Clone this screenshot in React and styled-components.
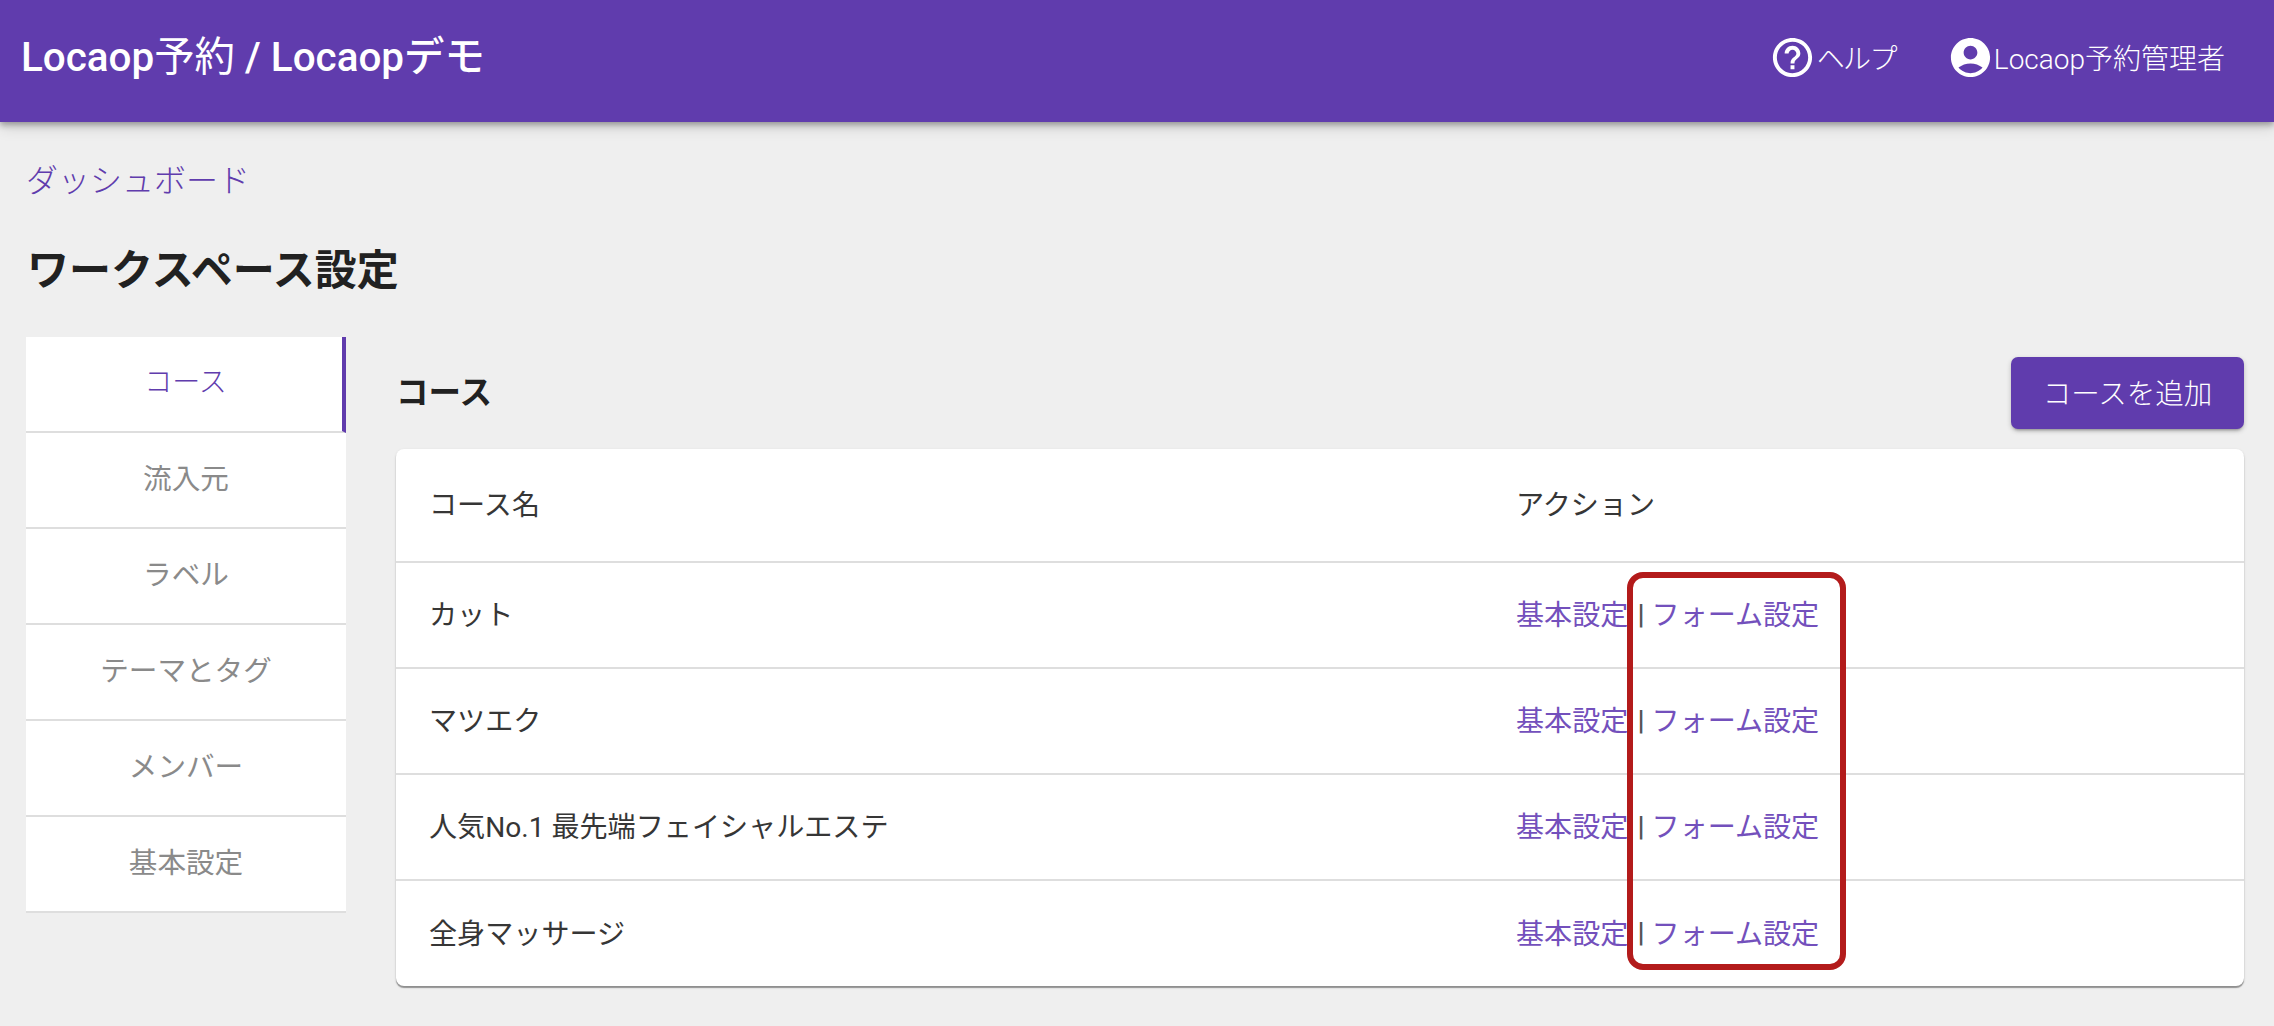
import React from "react";
import styled, { createGlobalStyle } from "styled-components";

const Global = createGlobalStyle`
  html, body { margin: 0; padding: 0; background: #efefef; }
  body { font-family: Roboto, "Noto Sans CJK JP", sans-serif; color: #212121; overflow: hidden; }
  * { box-sizing: border-box; }
`;
const purple = "#603cad";

const Page = styled.div`width: 2274px; height: 1026px; display: flex; flex-direction: column;`;
const Header = styled.header`
  height: 122px; flex: none; background: ${purple}; color: #fff; display: flex; align-items: center;
  justify-content: space-between; padding: 0 49px 8px 21px;
  box-shadow: 0 3px 6px rgba(0,0,0,.3), 0 6px 14px rgba(0,0,0,.12);
  margin-bottom: 37px;
`;
const Title = styled.div`font-size: 40.4px; font-weight: 500; line-height: 48px; white-space: nowrap; margin-top: 2px;`;
const Light = styled.span`font-weight: 400;`;
const HeaderNav = styled.nav`display: flex; align-items: center; gap: 51px;`;
const NavItem = styled.div`display: flex; align-items: center; font-size: 28px; font-weight: 300; gap: ${p => p.$gap}px; white-space: nowrap; letter-spacing: ${p => p.$tight ? "-1.6px" : "0"};`;
const Content = styled.main`padding: 0 30px 0 26px; flex: 1;`;
const Crumb = styled.a`display: block; font-size: 32px; color: ${purple}; line-height: 44px; font-weight: 300;`;
const PageTitle = styled.h1`margin: 40px 0 0 1px; font-size: 42px; font-weight: 700; line-height: 56px; height: 56px;`;
const Columns = styled.div`display: flex; gap: 50px; margin-top: 38px; align-items: flex-start;`;
const Side = styled.aside`width: 320px; flex: none; background: #fff;`;
const SideItem = styled.div`
  height: 96px; display: flex; align-items: center; justify-content: center;
  padding: 0 0 8px ${p => p.$active ? "3px" : "0"};
  font-size: ${p => p.$active ? "28px" : "28.6px"}; font-weight: ${p => p.$active ? 300 : 400}; color: ${p => p.$active ? purple : "#8a8a8a"};
  border-bottom: 2px solid #dedede;
  border-right: ${p => p.$active ? `4px solid ${purple}` : "none"};
`;
const Main = styled.section`flex: 1; min-width: 0;`;
const MainHead = styled.div`display: flex; justify-content: space-between; align-items: center; padding-top: 20px; height: 112px; padding-bottom: 20px;`;
const SubTitle = styled.h2`margin: 0 0 8px; font-size: 32.5px; font-weight: 700;`;
const AddButton = styled.button`
  width: 233px; height: 72px; border: 0; border-radius: 7px; background: ${purple}; color: #fff;
  font: 300 28.5px Roboto, "Noto Sans CJK JP", sans-serif; padding: 0 0 4px;
  box-shadow: 0 3px 3px -2px rgba(0,0,0,.3), 0 2px 5px rgba(0,0,0,.2);
`;
const Card = styled.div`
  position: relative; background: #fff; border-radius: 8px;
  box-shadow: 0 2px 1px rgba(0,0,0,.35), 0 1px 3px rgba(0,0,0,.12);
`;
const Row = styled.div`
  display: grid; grid-template-columns: 1087px 1fr; align-items: center; padding-bottom: 5px;
  height: ${p => p.$head ? "114px" : p.$last ? "105px" : "106px"}; font-size: 28.1px; font-weight: 400; color: #363636;
  border-bottom: ${p => p.$last ? "none" : "2px solid #dedede"};
`;
const Cell = styled.div`padding-left: 33px; white-space: nowrap; display: flex; align-items: center;`;
const ActionLink = styled.a`color: #7350bc;`;
const Sep = styled.span`color: #555; margin: 3px 7px 0 9px; font-family: Roboto, sans-serif; font-weight: 700;`;
const Highlight = styled.div`
  position: absolute; left: 1231px; top: 123px; width: 219px; height: 398px;
  border: 6px solid #b31b1b; border-radius: 16px; pointer-events: none;
`;

const sideItems = ["コース", "流入元", "ラベル", "テーマとタグ", "メンバー", "基本設定"];
const rows = ["カット", "マツエク", "人気No.1 最先端フェイシャルエステ", "全身マッサージ"];

const HelpIcon = () => (
  <svg width="47" height="47" viewBox="0 0 24 24" fill="#fff" aria-hidden="true">
    <path d="M11 18h2v-2h-2v2zm1-16C6.48 2 2 6.48 2 12s4.48 10 10 10 10-4.48 10-10S17.52 2 12 2zm0 18c-4.41 0-8-3.59-8-8s3.59-8 8-8 8 3.59 8 8-3.59 8-8 8zm0-14c-2.21 0-4 1.79-4 4h2c0-1.1.9-2 2-2s2 .9 2 2c0 2-3 1.75-3 5h2c0-2.25 3-2.5 3-5 0-2.21-1.79-4-4-4z" />
  </svg>
);
const AccountIcon = () => (
  <svg width="47" height="47" viewBox="0 0 24 24" fill="#fff" aria-hidden="true">
    <path d="M12 2C6.48 2 2 6.48 2 12s4.48 10 10 10 10-4.48 10-10S17.52 2 12 2zm0 4c1.93 0 3.5 1.57 3.5 3.5S13.93 13 12 13s-3.5-1.57-3.5-3.5S10.07 6 12 6zm0 14c-2.03 0-4.43-.82-6.14-2.88C7.55 15.8 9.68 15 12 15s4.45.8 6.14 2.12C16.43 19.18 14.03 20 12 20z" />
  </svg>
);

export default function App() {
  return (
    <Page>
      <Global />
      <Header>
        <Title>Locaop<Light>予約</Light> / Locaopデモ</Title>
        <HeaderNav>
          <NavItem $gap={1} $tight><HelpIcon />ヘルプ</NavItem>
          <NavItem $gap={0}><AccountIcon />Locaop予約管理者</NavItem>
        </HeaderNav>
      </Header>
      <Content>
        <Crumb>ダッシュボード</Crumb>
        <PageTitle>ワークスペース設定</PageTitle>
        <Columns>
          <Side>
            {sideItems.map((s, i) => <SideItem key={s} $active={i === 0}>{s}</SideItem>)}
          </Side>
          <Main>
            <MainHead>
              <SubTitle>コース</SubTitle>
              <AddButton>コースを追加</AddButton>
            </MainHead>
            <Card>
              <Row $head><Cell>コース名</Cell><Cell>アクション</Cell></Row>
              {rows.map((r, i) => (
                <Row key={r} $last={i === rows.length - 1}>
                  <Cell>{r}</Cell>
                  <Cell>
                    <ActionLink>基本設定</ActionLink><Sep>|</Sep><ActionLink>フォーム設定</ActionLink>
                  </Cell>
                </Row>
              ))}
              <Highlight />
            </Card>
          </Main>
        </Columns>
      </Content>
    </Page>
  );
}
